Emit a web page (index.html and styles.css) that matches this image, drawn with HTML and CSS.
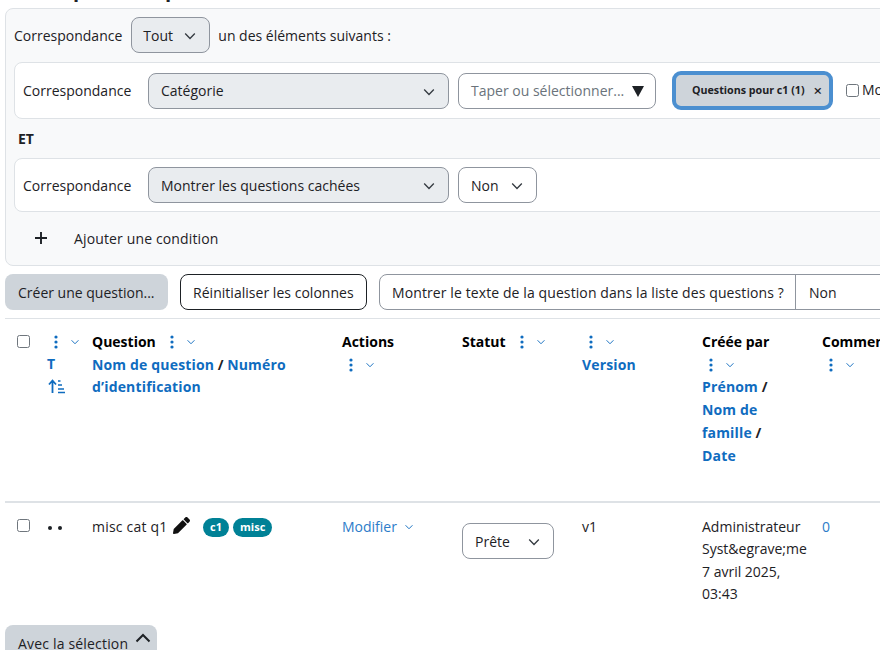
FILE: index.html
```html
<!DOCTYPE html>
<html lang="fr">
<head>
<meta charset="utf-8">
<title>Banque de questions</title>
<link rel="stylesheet" href="styles.css">
</head>
<body>
<svg class="defs" width="0" height="0" aria-hidden="true">
  <symbol id="chev" viewBox="0 0 16 16"><path d="M2.5 5.2 8 10.8l5.5-5.6" fill="none" stroke="currentColor" stroke-width="1.5"/></symbol>
  <symbol id="kebab" viewBox="0 0 4 14"><circle cx="2" cy="2" r="1.6"/><circle cx="2" cy="7" r="1.6"/><circle cx="2" cy="12" r="1.6"/></symbol>
</svg>
<main class="page">
  <div class="clipped-title"><span>Filtres pour les questions</span></div>
  <section class="filters">
    <div class="match-row">
      <span>Correspondance</span>
      <div class="sel grey tout">Tout <svg class="chev"><use href="#chev"/></svg></div>
      <span>un des éléments suivants :</span>
    </div>
    <div class="card card-a">
      <span class="lab">Correspondance</span>
      <div class="sel grey wide">Catégorie <svg class="chev"><use href="#chev"/></svg></div>
      <div class="sel white taper"><span class="placeholder">Taper ou sélectionner...</span><span class="tri"></span></div>
      <div class="chip"><span>Questions pour c1 (1)</span><span class="chip-x">×</span></div>
      <label class="check-label"><span class="box"></span><span>Montrer aussi les questions des sous-catégories</span></label>
    </div>
    <div class="et">ET</div>
    <div class="card card-b">
      <span class="lab">Correspondance</span>
      <div class="sel grey wide">Montrer les questions cachées <svg class="chev"><use href="#chev"/></svg></div>
      <div class="sel white non">Non <svg class="chev"><use href="#chev"/></svg></div>
    </div>
    <div class="add-row">
      <svg class="plus" viewBox="0 0 14 14"><path d="M7 1v12M1 7h12" stroke="currentColor" stroke-width="1.9" fill="none"/></svg>
      <span>Ajouter une condition</span>
    </div>
  </section>

  <div class="actions-bar">
    <div class="btn btn-grey">Créer une question...</div>
    <div class="btn btn-outline">Réinitialiser les colonnes</div>
    <div class="toggle"><span class="toggle-label">Montrer le texte de la question dans la liste des questions ?</span><span class="toggle-val">Non</span></div>
  </div>

  <table class="qtable">
    <colgroup><col class="c0"><col class="c1"><col class="c2"><col class="c3"><col class="c4"><col class="c5"><col class="c6"><col class="c7"></colgroup>
    <thead>
      <tr>
        <th class="cb"><span class="box"></span></th>
        <th class="tcol"><span class="menu center"><svg class="kebab"><use href="#kebab"/></svg><svg class="mini"><use href="#chev"/></svg></span><a class="link">T</a><br>
          <svg class="sort" viewBox="0 0 18 16"><path d="M4.5 15V3M1 6.5 4.5 2.5 8 6.5" fill="none" stroke="currentColor" stroke-width="1.8"/><path d="M10 3h2.5M10 7h4M10 11h6M10 14.5h7" stroke="currentColor" stroke-width="1.4"/></svg></th>
        <th><span class="title">Question</span><span class="menu gap"><svg class="kebab"><use href="#kebab"/></svg><svg class="mini"><use href="#chev"/></svg></span><br>
          <a class="link">Nom de question</a> / <a class="link">Numéro d’identification</a></th>
        <th><span class="title">Actions</span><br><span class="menu block"><svg class="kebab"><use href="#kebab"/></svg><svg class="mini"><use href="#chev"/></svg></span></th>
        <th><span class="title">Statut</span><span class="menu gap"><svg class="kebab"><use href="#kebab"/></svg><svg class="mini"><use href="#chev"/></svg></span></th>
        <th><span class="menu block"><svg class="kebab"><use href="#kebab"/></svg><svg class="mini"><use href="#chev"/></svg></span><br><a class="link">Version</a></th>
        <th><span class="title">Créée par</span><br><span class="menu block"><svg class="kebab"><use href="#kebab"/></svg><svg class="mini"><use href="#chev"/></svg></span><br><a class="link">Prénom</a> /<br><a class="link">Nom de famille</a> /<br><a class="link">Date</a></th>
        <th><span class="title nowrap">Commentaires</span><br><span class="menu block"><svg class="kebab"><use href="#kebab"/></svg><svg class="mini"><use href="#chev"/></svg></span></th>
      </tr>
    </thead>
    <tbody>
      <tr>
        <td class="cb"><span class="box"></span></td>
        <td class="dots"><span></span><span></span></td>
        <td><span class="qname">misc cat q1</span> <svg class="pencil" viewBox="0 0 512 512"><path d="M497.9 142.1l-46.1 46.1c-4.7 4.7-12.3 4.7-17 0l-111-111c-4.7-4.7-4.7-12.3 0-17l46.1-46.1c18.7-18.7 49.1-18.7 67.9 0l60.1 60.1c18.8 18.7 18.8 49.1 0 67.9zM284.2 99.8L21.6 362.4.4 483.9c-2.9 16.4 11.4 30.6 27.8 27.8l121.5-21.3 262.6-262.6c4.7-4.7 4.7-12.3 0-17l-111-111c-4.8-4.7-12.4-4.7-17.1 0z"/></svg><span class="tags"><span class="tag">c1</span><span class="tag">misc</span></span></td>
        <td><a class="action">Modifier <svg class="mini"><use href="#chev"/></svg></a></td>
        <td class="status-cell"><div class="sel white status">Prête <svg class="chev"><use href="#chev"/></svg></div></td>
        <td>v1</td>
        <td class="creator">Administrateur Syst&amp;egrave;me<br>7 avril 2025, 03:43</td>
        <td><a class="action">0</a></td>
      </tr>
    </tbody>
  </table>

  <div class="btn btn-grey bulk"><span class="bulk-text">Avec la sélection</span><svg class="up" viewBox="0 0 16 10"><path d="M1.5 8.5 8 2l6.5 6.5" fill="none" stroke="currentColor" stroke-width="2"/></svg></div>
</main>
</body>
</html>
```
FILE: styles.css
```css
html, body { margin: 0; padding: 0; height: 650px; overflow: hidden; background: #fff; }
body { font-family: "Open Sans", "Noto Sans", sans-serif; font-size: 14px; line-height: 22.5px; color: #1d2125; }
.defs { position: absolute; }
.page { width: 1400px; height: 650px; padding-left: 5px; box-sizing: border-box; overflow: hidden; }
.clipped-title { height: 8px; overflow: hidden; font-weight: 700; font-size: 20px; color: #1d2125; }
.clipped-title span { display: block; margin-top: -22px; line-height: 24px; white-space: nowrap; }

.filters { width: 1200px; height: 258px; box-sizing: border-box; background: #f8f9fa; border: 1px solid #dee2e6; border-radius: 8px; padding: 8px; }
.match-row { display: flex; align-items: center; height: 36px; white-space: nowrap; }
.match-row > span { padding-top: 2px; }
.sel { display: flex; align-items: center; justify-content: space-between; box-sizing: border-box; height: 36px; padding: 2px 12px 0; border: 1px solid #8f959e; border-radius: 8px; white-space: nowrap; flex: none; }
.grey { background: #e9ecef; }
.white { background: #fff; }
.tout { width: 79px; margin: 0 8px 0 9px; padding-left: 11px; }
.chev { width: 14px; height: 14px; margin-left: 8px; color: #343a40; flex: none; }
.card { display: flex; align-items: center; box-sizing: border-box; background: #fff; border: 1px solid #dee2e6; border-radius: 8px; padding: 0 8px; white-space: nowrap; }
.card-a { height: 57px; margin-top: 9px; }
.card-b { height: 54px; }
.lab { width: 125px; flex: none; padding-top: 2px; }
.wide { width: 301px; }
.taper { width: 198px; margin-left: 9px; }
.placeholder { color: #6a737b; }
.tri { width: 0; height: 0; border-left: 6px solid transparent; border-right: 6px solid transparent; border-top: 11px solid #1d2125; margin-left: 8px; }
.non { width: 79px; margin-left: 9px; }
.chip { display: flex; align-items: center; justify-content: space-between; box-sizing: border-box; width: 161px; height: 39px; margin-left: 16px; padding: 0 7px 0 16px; background: #ced4da; border: 4px solid #4b8fd0; border-radius: 9px; font-size: 10.7px; font-weight: 700; flex: none; }
.chip-x { font-size: 15px; font-weight: 600; }
.check-label { display: flex; align-items: center; gap: 3px; margin-left: 13px; }
.box { display: inline-block; box-sizing: border-box; width: 13px; height: 13px; background: #fff; border: 1px solid #6f767d; border-radius: 2.5px; vertical-align: middle; }
.et { height: 39px; line-height: 40px; padding-left: 4px; font-weight: 700; }
.add-row { display: flex; align-items: center; height: 52px; letter-spacing: .14px; }
.add-row span { padding-top: 2px; }
.plus { width: 14px; height: 14px; margin-left: 20px; margin-right: 26px; color: #1d2125; }

.actions-bar { display: flex; gap: 12px; margin-top: 8px; height: 36px; white-space: nowrap; padding-bottom: 8px; border-bottom: 1px solid #dee2e6; }
.btn { display: flex; align-items: center; box-sizing: border-box; height: 36px; border-radius: 8px; padding: 2px 12px 0; flex: none; white-space: nowrap; }
.btn-grey { background: #ced4da; width: 163px; padding-left: 13px; }
.btn-outline { background: #fff; border: 1px solid #1d2125; width: 187px; letter-spacing: .03px; }
.toggle { display: flex; height: 36px; box-sizing: border-box; border: 1px solid #8f959e; border-radius: 8px; background: #fff; width: 700px; align-items: center; }
.toggle-label { width: 416px; padding: 1px 12px 0; box-sizing: border-box; border-right: 1px solid #8f959e; height: 34px; line-height: 34px; flex: none; letter-spacing: .1px; }
.toggle-val { padding: 2px 0 0 13px; }

.qtable { table-layout: fixed; width: 1200px; border-collapse: collapse; }
.c0 { width: 30px; } .c1 { width: 45px; } .c2 { width: 250px; } .c3, .c4, .c5, .c6 { width: 120px; } .c7 { width: 395px; }
.qtable th, .qtable td { padding: 12px; text-align: left; vertical-align: top; }
.qtable th { height: 158px; font-weight: 700; line-height: 22.7px; border-bottom: 2px solid #dee2e6; }
.qtable td { height: 97px; padding-top: 13px; }
.qtable th.cb, .qtable td.cb { padding: 16px 0 0 12px; }
.qtable .cb .box { display: block; }
.qtable td.creator { line-height: 22.3px; }
.qname { letter-spacing: .2px; }
.title { color: #000; }
.nowrap { white-space: nowrap; }
.link { color: #0f6cbf; letter-spacing: .16px; }
.action { color: #2c7cc9; }
.menu { color: #0f6cbf; display: inline-flex; align-items: center; height: 22px; vertical-align: top; }
.menu.gap { margin-left: 14px; }
.menu.block { padding-left: 7px; }
.menu.center { padding-left: 7px; display: flex; width: 40px; }
.kebab { width: 4px; height: 14px; fill: currentColor; flex: none; }
.mini { width: 10px; height: 10px; margin-left: 12px; color: #0f6cbf; flex: none; }
.action .mini { margin-left: 3px; }
.sort { width: 18px; height: 16px; margin-left: 1px; color: #0f6cbf; vertical-align: -2px; }
.dots { white-space: nowrap; }
.dots span { display: inline-block; width: 4px; height: 4px; margin-right: 6px; margin-left: 1px; background: #1d2125; border-radius: 50%; vertical-align: 2px; }
.dots span + span { margin-left: 0; }
.pencil { width: 17px; height: 17px; fill: #111; vertical-align: -2px; margin-left: 2px; }
.tags { display: inline-flex; gap: 4px; margin-left: 13px; vertical-align: 1px; }
.tag { background: #008196; color: #fff; font-size: 11px; font-weight: 700; line-height: 18px; height: 19px; padding: 0 7px; border-radius: 10px; }
.qtable td.status-cell { padding-top: 12px; }
.status { width: 92px; margin-top: 8px; }
.bulk { width: 152px; height: 38px; padding-top: 0; }
.bulk-text { letter-spacing: .18px; }
.up { width: 16px; height: 10px; margin-left: 7px; margin-top: -12px; color: #1d2125; flex: none; }
```
